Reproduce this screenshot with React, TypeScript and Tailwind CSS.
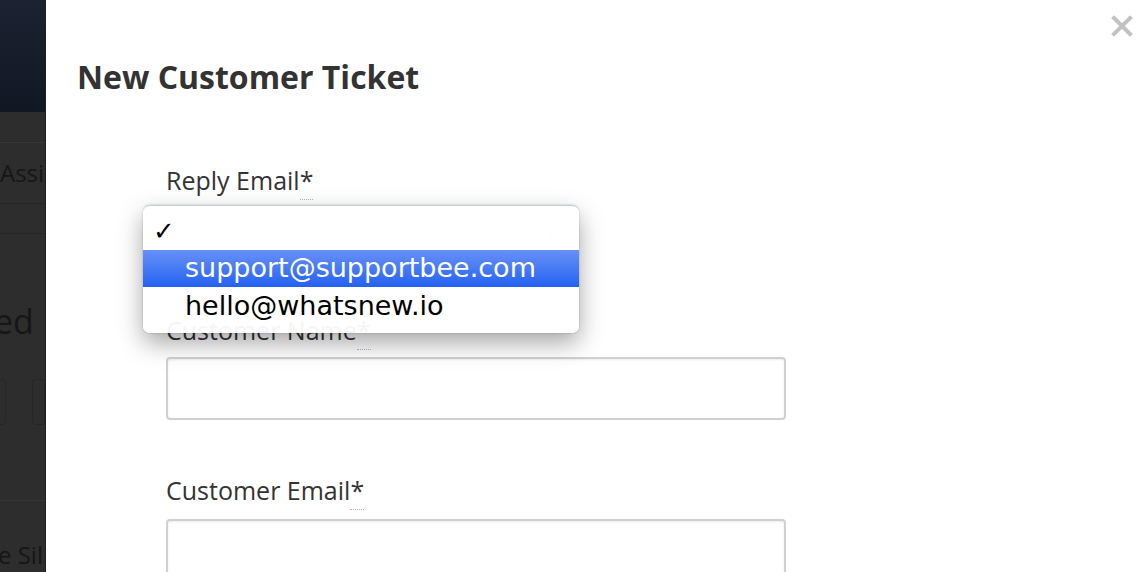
import React from "react";

const sans = { fontFamily: '"Open Sans", "Noto Sans", sans-serif' };
const lucida = { fontFamily: '"DejaVu Sans", "Liberation Sans", sans-serif' };

function Label(props: { text: string }) {
  return (
    <p className="text-[25px] leading-[30px] text-[#333333]" style={sans}>
      {props.text}
      <abbr className="no-underline border-b border-dotted border-[#b5b5b5] pb-[2px]">*</abbr>
    </p>
  );
}

function Backdrop() {
  return (
    <div className="w-[46px] shrink-0 overflow-hidden bg-[#2d2d2d] border-r border-[#1f1f1f] flex flex-col" style={sans}>
      <div className="h-[112px] shrink-0 bg-gradient-to-b from-[#1c2231] to-[#111723]" />
      <div className="h-[31px] shrink-0 border-b border-[#363636]" />
      <div className="h-[61px] shrink-0 border-b border-[#262626] flex items-center">
        <span className="text-[24px] text-[#161616] whitespace-nowrap">Assi</span>
      </div>
      <div className="h-[30px] shrink-0 border-b border-[#262626]" />
      <div className="h-[64px] shrink-0" />
      <div className="h-[46px] shrink-0 flex items-center">
        <span className="text-[34px] text-[#161616] whitespace-nowrap -ml-[6px]">ed</span>
      </div>
      <div className="mt-[35px] flex gap-[26px] h-[46px] shrink-0">
        <div className="w-[12px] -ml-[2px] rounded-r-[4px] border border-[#262626]" />
        <div className="w-[20px] rounded-l-[4px] border border-[#262626]" />
      </div>
      <div className="mt-[75px] shrink-0 border-b border-dotted border-[#3e3e3e]" />
      <div className="mt-[36px] shrink-0">
        <span className="text-[24px] text-[#161616] whitespace-nowrap -ml-[2px]">e Sil</span>
      </div>
    </div>
  );
}

function Dropdown() {
  return (
    <div
      className="absolute left-[97px] top-[205px] w-[436px] h-[128px] rounded-[7px] bg-white/95 border-t border-[#c3ccd8] shadow-[0_10px_24px_rgba(0,0,0,0.35),0_0_2px_rgba(0,0,0,0.25)] flex flex-col pt-[6px]"
      style={lucida}
    >
      <div className="h-[38px] flex items-center pl-[10px] text-[26px] font-bold text-black">✓</div>
      <div className="h-[37px] flex items-center pl-[42px] text-[27px] text-white bg-gradient-to-b from-[#6790f6] to-[#2361f1]">
        support@supportbee.com
      </div>
      <div className="h-[38px] flex items-center pl-[42px] text-[27px] text-black">hello@whatsnew.io</div>
    </div>
  );
}

export default function App() {
  return (
    <div className="w-[1136px] h-[572px] overflow-hidden flex bg-white">
      <Backdrop />
      <div className="relative flex-1 bg-white" style={sans}>
        <button className="absolute right-[3px] top-[15px] w-[22px] h-[22px]" aria-label="Close">
          <svg viewBox="0 0 22 22" className="w-[22px] h-[22px]">
            <path d="M3 3 L19 19 M19 3 L3 19" stroke="#c2c2c2" strokeWidth="4" strokeLinecap="square" />
          </svg>
        </button>
        <h1 className="pl-[31px] pt-[57px] text-[32px] leading-[40px] font-bold text-[#333333]">New Customer Ticket</h1>
        <div className="pl-[120px] pt-[68px] flex flex-col">
          <Label text="Reply Email" />
          <div className="mt-[14px] w-[400px] h-[40px] rounded-[5px] border border-[#dadada] flex items-center justify-end pr-[8px]">
            <span className="text-[10px] leading-[11px] text-[#d6d6d6] flex flex-col">
              <span>▲</span>
              <span>▼</span>
            </span>
          </div>
          <div className="mt-[66px]">
            <Label text="Customer Name" />
          </div>
          <div className="mt-[12px] w-[620px] h-[63px] rounded-[4px] border-2 border-[#d0d0d0] shadow-[inset_0_1px_2px_rgba(0,0,0,0.08)]" />
          <div className="mt-[55px]">
            <Label text="Customer Email" />
          </div>
          <div className="mt-[14px] w-[620px] h-[63px] rounded-[4px] border-2 border-[#d0d0d0] shadow-[inset_0_1px_2px_rgba(0,0,0,0.08)]" />
        </div>
        <Dropdown />
      </div>
    </div>
  );
}
